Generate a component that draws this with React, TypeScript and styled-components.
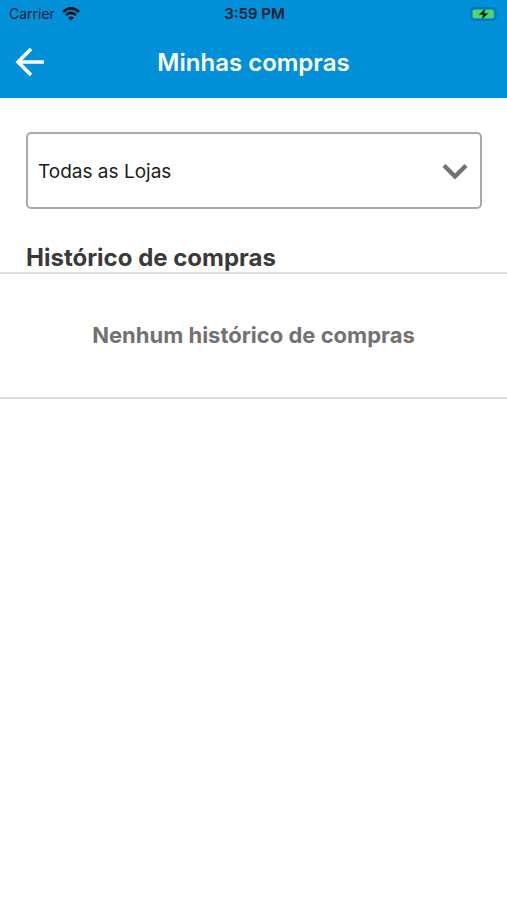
import React, { useState } from 'react';
import styled, { createGlobalStyle } from 'styled-components';

const GlobalStyle = createGlobalStyle`
  * {
    box-sizing: border-box;
  }
  body {
    margin: 0;
    background: #ffffff;
    font-family: Inter, 'Liberation Sans', sans-serif;
  }
`;

const Screen = styled.div`
  min-height: 100vh;
  background: #ffffff;
`;

const Header = styled.header`
  background: #0290d8;
`;

const StatusBar = styled.div`
  display: grid;
  grid-template-columns: 1fr auto 1fr;
  align-items: center;
  height: 27px;
  padding: 0 7px 0 9px;
  color: #06202f;
  font-size: 14px;
  line-height: 20px;
`;

const Carrier = styled.div`
  display: flex;
  align-items: center;
  gap: 7px;
`;

const Clock = styled.time`
  font-size: 15px;
  font-weight: 600;
`;

const BatterySlot = styled.div`
  display: flex;
  justify-content: flex-end;
`;

const NavBar = styled.div`
  display: grid;
  grid-template-columns: 60px 1fr 60px;
  align-items: center;
  height: 71px;
`;

const BackButton = styled.button`
  display: flex;
  align-items: center;
  justify-content: center;
  width: 60px;
  height: 60px;
  padding: 0;
  border: 0;
  background: none;
  color: #ffffff;
  cursor: pointer;
`;

const Title = styled.h1`
  margin: 0;
  color: #ffffff;
  font-size: 24px;
  font-weight: 600;
  line-height: 32px;
  text-align: center;
`;

const StoreField = styled.div`
  display: grid;
  align-items: center;
  margin: 34px 25px 0 26px;

  > * {
    grid-area: 1 / 1;
  }

  > svg {
    justify-self: end;
    margin-right: 13px;
    pointer-events: none;
  }
`;

const StoreSelect = styled.select`
  appearance: none;
  width: 100%;
  height: 77px;
  padding: 2px 48px 0 10px;
  border: 2px solid #a9a9a9;
  border-radius: 5px;
  background: #ffffff;
  color: #1c1c1c;
  font-family: inherit;
  font-size: 19px;
  cursor: pointer;
`;

const SectionTitle = styled.h2`
  margin: 35px 26px 0;
  color: #3a3a3a;
  font-size: 24px;
  font-weight: 700;
  line-height: 28px;
`;

const HistoryPanel = styled.section`
  padding: 46px 24px;
  border-top: 2px solid #dddddd;
  border-bottom: 2px solid #dddddd;
`;

const EmptyMessage = styled.p`
  margin: 0;
  color: #727272;
  font-size: 22px;
  font-weight: 700;
  line-height: 31px;
  text-align: center;
`;

function WifiIcon() {
  return (
    <svg width="18" height="14" viewBox="0 0 18 14" fill="none" stroke="#06131c" aria-hidden="true">
      <path d="M1 5 Q9 -2.4 17 5" strokeWidth="2.7" />
      <path d="M4 8.2 Q9 3.6 14 8.2" strokeWidth="2.5" />
      <path d="M9 13.6 L6 10.7 Q9 8.3 12 10.7 Z" fill="#06131c" stroke="none" />
    </svg>
  );
}

function BatteryIcon() {
  return (
    <svg width="30" height="14" viewBox="0 0 30 14" aria-hidden="true">
      <rect x="1" y="1" width="25" height="12" rx="3.5" fill="none" stroke="#0b70ad" strokeWidth="1.4" />
      <rect x="2.7" y="2.7" width="21" height="8.6" rx="1.8" fill="#52d769" />
      <path d="M27.6 4.4 Q30.4 7 27.6 9.6 Z" fill="#0b70ad" />
      <path d="M15.6 1.2 L8.8 7.8 H13 L11.6 12.8 L18.4 6.2 H14.2 Z" fill="#06131c" stroke="#2c8f66" strokeWidth="0.6" />
    </svg>
  );
}

function ArrowIcon() {
  return (
    <svg width="30" height="30" viewBox="0 0 30 30" fill="none" stroke="currentColor" strokeWidth="3.6" aria-hidden="true">
      <path d="M16 1 L3 14 L16 27 M3 14 H29" />
    </svg>
  );
}

function ChevronIcon() {
  return (
    <svg width="28" height="18" viewBox="0 0 28 18" fill="none" stroke="#737373" strokeWidth="4.4" aria-hidden="true">
      <path d="M3 3.5 L14 14.5 L25 3.5" />
    </svg>
  );
}

export default function App() {
  const [store, setStore] = useState('all');

  return (
    <Screen>
      <GlobalStyle />
      <Header>
        <StatusBar>
          <Carrier>
            Carrier
            <WifiIcon />
          </Carrier>
          <Clock>3:59 PM</Clock>
          <BatterySlot>
            <BatteryIcon />
          </BatterySlot>
        </StatusBar>
        <NavBar>
          <BackButton type="button" aria-label="Voltar">
            <ArrowIcon />
          </BackButton>
          <Title>Minhas compras</Title>
        </NavBar>
      </Header>
      <main>
        <StoreField>
          <StoreSelect aria-label="Loja" value={store} onChange={(event) => setStore(event.target.value)}>
            <option value="all">Todas as Lojas</option>
          </StoreSelect>
          <ChevronIcon />
        </StoreField>
        <SectionTitle id="history-title">Histórico de compras</SectionTitle>
        <HistoryPanel aria-labelledby="history-title">
          <EmptyMessage>Nenhum histórico de compras</EmptyMessage>
        </HistoryPanel>
      </main>
    </Screen>
  );
}
